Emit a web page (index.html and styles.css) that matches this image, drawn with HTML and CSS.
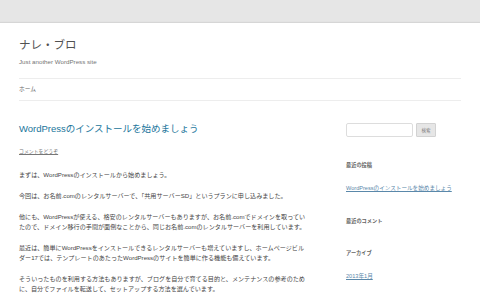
FILE: index.html
```html
<!DOCTYPE html>
<html lang="ja">
<head>
	<meta charset="UTF-8">
	<title>ナレ・ブロ | Just another WordPress site</title>
	<link rel="stylesheet" href="styles.css">
</head>
<body>
	<div class="site">
		<div class="site-header">
			<h1 class="site-title">ナレ・ブロ</h1>
			<h2 class="site-description">Just another WordPress site</h2>
			<div class="main-nav">
				<ul>
					<li><a href="#">ホーム</a></li>
				</ul>
			</div>
		</div>
		<div class="site-main">
			<!-- 記事 -->
			<div class="content">
				<div class="entry-header">
					<h1 class="entry-title"><a href="#">WordPressのインストールを始めましょう</a></h1>
					<div class="comments-link"><a href="#">コメントをどうぞ</a></div>
				</div>
				<div class="entry-content">
					<p>まずは、WordPressのインストールから始めましょう。</p>
					<p>今回は、お名前.comのレンタルサーバーで、「共用サーバーSD」というプランに申し込みました。</p>
					<p>他にも、WordPressが使える、格安のレンタルサーバーもありますが、お名前.comでドメインを取っていたので、ドメイン移行の手間が面倒なことから、同じお名前.comのレンタルサーバーを利用しています。</p>
					<p>最近は、簡単にWordPressをインストールできるレンタルサーバーも増えていますし、ホームページビルダー17では、テンプレートのあたったWordPressのサイトを簡単に作る機能も備えています。</p>
					<p>そういったものを利用する方法もありますが、ブログを自分で育てる目的と、メンテナンスの参考のために、自分でファイルを転送して、セットアップする方法を選んでいます。</p>
				</div>
			</div>
			<!-- サイドバー -->
			<div class="sidebar">
				<div class="widget search-form">
					<input type="text" class="search-text">
					<input type="button" class="search-btn" value="検索">
				</div>
				<div class="widget">
					<h3 class="widget-title">最近の投稿</h3>
					<ul>
						<li><a href="#">WordPressのインストールを始めましょう</a></li>
					</ul>
				</div>
				<div class="widget">
					<h3 class="widget-title">最近のコメント</h3>
				</div>
				<div class="widget">
					<h3 class="widget-title">アーカイブ</h3>
					<ul>
						<li><a href="#">2013年1月</a></li>
					</ul>
				</div>
			</div>
		</div>
	</div>
</body>
</html>
```

FILE: styles.css
```css
*{
	margin:0;
	padding:0;
	list-style:none;
}
body{
	background:#e6e6e6;
	font-family:"Liberation Sans","Noto Sans CJK JP",sans-serif;
	color:#444;
}
a{
	color:#21759b;
}
.site{
	margin-top:23px;
	min-height:285px;
	padding:0 19px;
	background:#fff;
	box-shadow:0 -1px 1px rgba(100,100,100,.12);
}
/*----------------header----------------*/
.site-header{
	padding-top:15px;
}
.site-title{
	font-size:11.5px;
	line-height:14px;
	font-weight:normal;
	color:#515151;
}
.site-description{
	margin-top:6px;
	font-size:6.2px;
	line-height:8px;
	font-weight:normal;
	color:#757575;
}
.main-nav{
	margin-top:12px;
	border-top:1px solid #ededed;
	border-bottom:1px solid #ededed;
}
.main-nav li{
	font-size:5.7px;
	line-height:21px;
}
.main-nav a{
	color:#6a6a6a;
	text-decoration:none;
}
/*----------------main----------------*/
.site-main{
	display:flex;
	justify-content:space-between;
	padding-top:22px;
}
.content{
	width:288px;
}
.entry-title{
	font-size:9.5px;
	line-height:12px;
	font-weight:normal;
}
.entry-title a{
	text-decoration:none;
}
.comments-link{
	margin-top:13px;
	font-size:4.9px;
	line-height:8px;
}
.comments-link a{
	color:#777;
}
.entry-content{
	margin-top:14px;
}
.entry-content p{
	font-size:6.1px;
	line-height:10px;
	margin-bottom:11px;
}
/*----------------sidebar----------------*/
.sidebar{
	width:115px;
}
.widget{
	margin-bottom:24px;
}
.search-form{
	display:flex;
	gap:3px;
}
.search-text{
	width:67px;
	height:14px;
	border:1px solid #ddd;
	border-radius:2px;
	box-sizing:border-box;
	background:#fff;
}
.search-btn{
	width:20px;
	height:14px;
	border:1px solid #d2d2d2;
	border-radius:1px;
	background:#e6e6e6;
	color:#7c7c7c;
	font-size:4.5px;
	font-family:"Liberation Sans","Noto Sans CJK JP",sans-serif;
}
.widget-title{
	font-size:5.2px;
	line-height:8px;
	color:#636363;
	margin-bottom:14px;
}
.widget li{
	font-size:5.6px;
	line-height:10px;
}
.widget a{
	color:#5a88aa;
}
```
